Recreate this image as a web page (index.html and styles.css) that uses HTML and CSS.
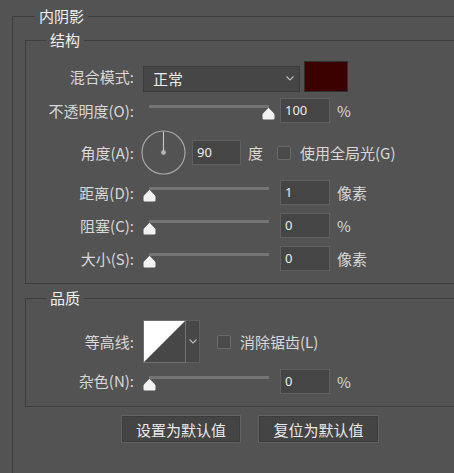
FILE: index.html
```html
<!DOCTYPE html>
<html lang="zh-CN">
<head>
  <meta charset="UTF-8">
  <meta name="viewport" content="width=device-width, initial-scale=1.0">
  <title>内阴影</title>
  <link rel="stylesheet" href="styles.css">
</head>
<body>
  <fieldset class="dialog">
    <legend>内阴影</legend>

    <fieldset class="group">
      <legend>结构</legend>
      <div class="group-body">
        <div class="row row-blend">
          <span class="label">混合模式:</span>
          <div class="select">
            <span>正常</span>
            <svg class="chevron" width="8" height="5" viewBox="0 0 8 5"><path d="M0.5 0.5 L4 4 L7.5 0.5" fill="none" stroke="#bdbdbd" stroke-width="1.1"/></svg>
          </div>
          <span class="swatch"></span>
        </div>

        <div class="row row-opacity">
          <span class="label">不透明度(O):</span>
          <div class="slider">
            <span class="track"></span>
            <svg class="thumb" style="left: 119px" width="13" height="13" viewBox="0 0 13 13"><path d="M6.5 0.8 L11.8 6.2 Q12.5 6.9 12.5 8 L12.5 11.2 Q12.5 12.5 11.2 12.5 L1.8 12.5 Q0.5 12.5 0.5 11.2 L0.5 8 Q0.5 6.9 1.2 6.2 Z" fill="#f2f2f2"/></svg>
          </div>
          <span class="field">100</span>
          <span class="unit">%</span>
        </div>

        <div class="row row-angle">
          <span class="label">角度(A):</span>
          <svg class="dial" width="45" height="45" viewBox="0 0 45 45">
            <circle cx="22.5" cy="22.5" r="21.5" fill="none" stroke="#a6a6a6" stroke-width="1.2"/>
            <line x1="22.5" y1="22.5" x2="22.5" y2="1.5" stroke="#c4c4c4" stroke-width="1.2"/>
            <circle cx="22.5" cy="22.5" r="2.4" fill="#b4b4b4"/>
          </svg>
          <span class="field field-angle">90</span>
          <span class="unit">度</span>
          <span class="checkbox"></span>
          <span class="check-label">使用全局光(G)</span>
        </div>

        <div class="row row-distance">
          <span class="label">距离(D):</span>
          <div class="slider">
            <span class="track"></span>
            <svg class="thumb" style="left: 0px" width="13" height="13" viewBox="0 0 13 13"><path d="M6.5 0.8 L11.8 6.2 Q12.5 6.9 12.5 8 L12.5 11.2 Q12.5 12.5 11.2 12.5 L1.8 12.5 Q0.5 12.5 0.5 11.2 L0.5 8 Q0.5 6.9 1.2 6.2 Z" fill="#f2f2f2"/></svg>
          </div>
          <span class="field">1</span>
          <span class="unit">像素</span>
        </div>

        <div class="row row-next">
          <span class="label">阻塞(C):</span>
          <div class="slider">
            <span class="track"></span>
            <svg class="thumb" style="left: 0px" width="13" height="13" viewBox="0 0 13 13"><path d="M6.5 0.8 L11.8 6.2 Q12.5 6.9 12.5 8 L12.5 11.2 Q12.5 12.5 11.2 12.5 L1.8 12.5 Q0.5 12.5 0.5 11.2 L0.5 8 Q0.5 6.9 1.2 6.2 Z" fill="#f2f2f2"/></svg>
          </div>
          <span class="field">0</span>
          <span class="unit">%</span>
        </div>

        <div class="row row-next">
          <span class="label">大小(S):</span>
          <div class="slider">
            <span class="track"></span>
            <svg class="thumb" style="left: 0px" width="13" height="13" viewBox="0 0 13 13"><path d="M6.5 0.8 L11.8 6.2 Q12.5 6.9 12.5 8 L12.5 11.2 Q12.5 12.5 11.2 12.5 L1.8 12.5 Q0.5 12.5 0.5 11.2 L0.5 8 Q0.5 6.9 1.2 6.2 Z" fill="#f2f2f2"/></svg>
          </div>
          <span class="field">0</span>
          <span class="unit">像素</span>
        </div>
      </div>
    </fieldset>

    <fieldset class="group group-quality">
      <legend>品质</legend>
      <div class="group-body quality-body">
        <div class="row row-contour">
          <span class="label">等高线:</span>
          <svg class="contour" width="43" height="43" viewBox="0 0 43 43">
            <rect x="0.5" y="0.5" width="42" height="42" fill="#474747" stroke="#707070"/>
            <polygon points="1,1 42,1 1,42" fill="#ffffff"/>
          </svg>
          <div class="contour-drop">
            <svg width="8" height="5" viewBox="0 0 8 5"><path d="M0.5 0.5 L4 4 L7.5 0.5" fill="none" stroke="#bdbdbd" stroke-width="1.1"/></svg>
          </div>
          <span class="checkbox checkbox-aa"></span>
          <span class="check-label">消除锯齿(L)</span>
        </div>

        <div class="row row-noise">
          <span class="label">杂色(N):</span>
          <div class="slider">
            <span class="track"></span>
            <svg class="thumb" style="left: 0px" width="13" height="13" viewBox="0 0 13 13"><path d="M6.5 0.8 L11.8 6.2 Q12.5 6.9 12.5 8 L12.5 11.2 Q12.5 12.5 11.2 12.5 L1.8 12.5 Q0.5 12.5 0.5 11.2 L0.5 8 Q0.5 6.9 1.2 6.2 Z" fill="#f2f2f2"/></svg>
          </div>
          <span class="field">0</span>
          <span class="unit">%</span>
        </div>
      </div>
    </fieldset>

    <div class="buttons">
      <button type="button" class="btn">设置为默认值</button>
      <button type="button" class="btn btn-reset">复位为默认值</button>
    </div>
  </fieldset>
</body>
</html>
```

FILE: styles.css
```css
body {
  margin: 0;
  height: 473px;
  overflow: hidden;
  background: #535353;
  color: #d8d8d8;
  font-family: "Noto Sans CJK SC", "Noto Sans", sans-serif;
  font-size: 15px;
}

fieldset {
  margin: 0;
  padding: 0;
  min-width: 0;
  border: 1px solid #3d3d3d;
}

legend {
  margin-left: 22px;
  padding: 0 4px;
  line-height: 16px;
  color: #f0f0f0;
}

/* the panel runs on past the right and bottom edges of the window */
.dialog {
  margin: 8px 0 0 12px;
  width: 441px;
  padding-bottom: 31px;
}

.group {
  margin: 8px -2px 0 12px;
}

.group legend {
  margin-left: 20px;
}

.group-body {
  padding: 13px 0 12px;
}

.group-quality {
  margin-top: 6px;
}

.quality-body {
  padding: 14px 0 12px;
}

/* rows */
.row {
  display: flex;
  align-items: center;
  height: 25px;
}

.label {
  flex: none;
  width: 108px;
  margin-right: 9px;
  text-align: right;
  line-height: 20px;
}

.row-blend {
  height: 31px;
}

.row-opacity {
  margin-top: 6px;
}

.row-angle {
  height: 45px;
  margin-top: 7px;
}

.row-distance {
  margin-top: 5px;
}

.row-next {
  margin-top: 8px;
}

.row-contour {
  height: 43px;
}

.row-noise {
  margin-top: 5px;
  height: 26px;
}

/* blend mode select */
.select {
  display: flex;
  align-items: center;
  justify-content: space-between;
  box-sizing: border-box;
  width: 157px;
  height: 26px;
  margin-top: 4px;
  padding: 0 5px 0 9px;
  background: #464646;
  border: 1px solid #3c3c3c;
  color: #ececec;
}

.swatch {
  box-sizing: border-box;
  width: 44px;
  height: 31px;
  margin-left: 4px;
  background: #3b0000;
  border: 1px solid #2f2f2f;
}

/* sliders */
.slider {
  position: relative;
  flex: none;
  width: 133px;
  height: 25px;
  margin-right: 4px;
}

.track {
  position: absolute;
  left: 6px;
  top: 7px;
  width: 120px;
  height: 3px;
  border-radius: 1px;
  background: #747474;
}

.thumb {
  position: absolute;
  top: 9px;
}

.field {
  box-sizing: border-box;
  flex: none;
  width: 50px;
  height: 25px;
  padding-left: 4px;
  background: #454545;
  border: 1px solid #606060;
  color: #ececec;
  font-family: "Noto Sans", sans-serif;
  font-size: 13px;
  line-height: 23px;
}

.unit {
  margin-left: 7px;
}

/* angle */
.dial {
  margin-left: -2px;
}

.field-angle {
  width: 49px;
  margin-left: 6px;
}

.checkbox {
  box-sizing: border-box;
  width: 14px;
  height: 14px;
  margin-left: 14px;
  background: #4a4a4a;
  border: 1px solid #6a6a6a;
  border-radius: 2px;
}

.check-label {
  margin-left: 9px;
}

/* contour */
.contour-drop {
  display: flex;
  align-items: center;
  justify-content: center;
  box-sizing: border-box;
  width: 14px;
  height: 43px;
  background: #474747;
  border: 1px solid #5e5e5e;
  border-left: none;
}

.checkbox-aa {
  margin-left: 17px;
}

/* footer buttons */
.buttons {
  display: flex;
  gap: 17px;
  margin: 8px 0 0 108px;
}

.btn {
  box-sizing: border-box;
  width: 120px;
  height: 28px;
  padding: 0;
  background: #444444;
  border: 1px solid #626262;
  box-shadow: inset 0 0 0 1px #3b3b3b;
  color: #eaeaea;
  font-family: "Noto Sans CJK SC", "Noto Sans", sans-serif;
  font-size: 15px;
}

.btn-reset {
  width: 121px;
}
```
